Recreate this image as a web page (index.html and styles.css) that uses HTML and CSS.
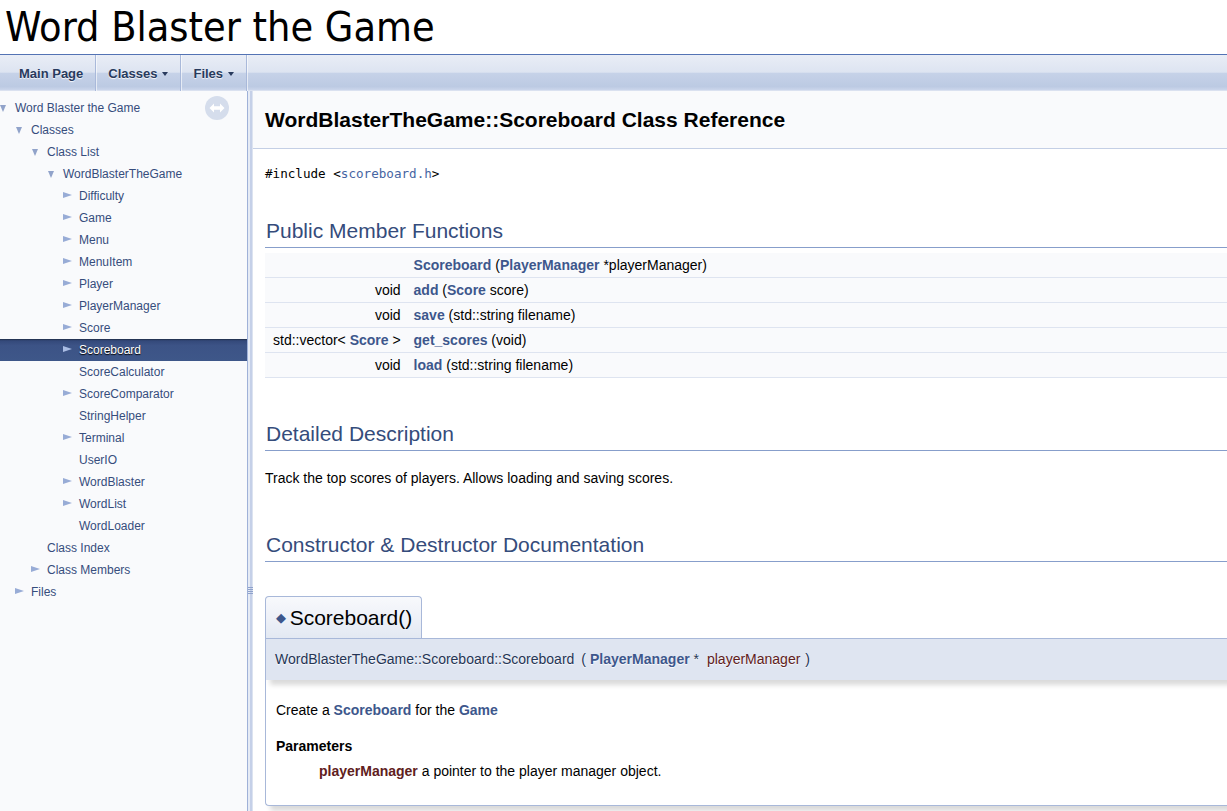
FILE: index.html
```html
<!DOCTYPE html>
<html lang="en">
<head>
<meta charset="utf-8">
<title>Word Blaster the Game: WordBlasterTheGame::Scoreboard Class Reference</title>
<link rel="stylesheet" href="styles.css">
</head>
<body>
<div class="titlearea"><div class="projectname">Word Blaster the Game</div></div>
<nav class="navbar">
  <ul class="tabs">
    <li><a href="#">Main Page</a></li>
    <li><a href="#">Classes<span class="caret"></span></a></li>
    <li><a href="#">Files<span class="caret"></span></a></li>
  </ul>
</nav>
<div class="main">
  <aside class="sidenav">
    <a class="sync" href="#" title="sync">
      <svg width="24" height="24" viewBox="0 0 24 24"><circle cx="12" cy="12" r="12" fill="#D5DDEC"/><path d="M4.5 12 L9 7.5 V10.3 H15 V7.5 L19.5 12 L15 16.5 V13.7 H9 V16.5 Z" fill="#fff"/></svg>
    </a>
    <ul class="tree">
      <li class="row l0"><span class="arr dn"></span><a href="#">Word Blaster the Game</a></li>
      <li class="row l1"><span class="arr dn"></span><a href="#">Classes</a></li>
      <li class="row l2"><span class="arr dn"></span><a href="#">Class List</a></li>
      <li class="row l3"><span class="arr dn"></span><a href="#">WordBlasterTheGame</a></li>
      <li class="row l4"><span class="arr rt"></span><a href="#">Difficulty</a></li>
      <li class="row l4"><span class="arr rt"></span><a href="#">Game</a></li>
      <li class="row l4"><span class="arr rt"></span><a href="#">Menu</a></li>
      <li class="row l4"><span class="arr rt"></span><a href="#">MenuItem</a></li>
      <li class="row l4"><span class="arr rt"></span><a href="#">Player</a></li>
      <li class="row l4"><span class="arr rt"></span><a href="#">PlayerManager</a></li>
      <li class="row l4"><span class="arr rt"></span><a href="#">Score</a></li>
      <li class="row l4 selected"><span class="arr rt"></span><a href="#">Scoreboard</a></li>
      <li class="row l4"><span class="arr"></span><a href="#">ScoreCalculator</a></li>
      <li class="row l4"><span class="arr rt"></span><a href="#">ScoreComparator</a></li>
      <li class="row l4"><span class="arr"></span><a href="#">StringHelper</a></li>
      <li class="row l4"><span class="arr rt"></span><a href="#">Terminal</a></li>
      <li class="row l4"><span class="arr"></span><a href="#">UserIO</a></li>
      <li class="row l4"><span class="arr rt"></span><a href="#">WordBlaster</a></li>
      <li class="row l4"><span class="arr rt"></span><a href="#">WordList</a></li>
      <li class="row l4"><span class="arr"></span><a href="#">WordLoader</a></li>
      <li class="row l2"><span class="arr"></span><a href="#">Class Index</a></li>
      <li class="row l2"><span class="arr rt"></span><a href="#">Class Members</a></li>
      <li class="row l1"><span class="arr rt"></span><a href="#">Files</a></li>
    </ul>
  </aside>
  <div class="splitter"><span class="grip"></span></div>
  <main class="doc">
    <div class="header">
      <div class="title">WordBlasterTheGame::Scoreboard Class Reference</div>
    </div>
    <div class="contents">
      <div class="include"><code>#include &lt;<a class="code" href="#">scoreboard.h</a>&gt;</code></div>

      <h2 class="groupheader first">Public Member Functions</h2>
      <table class="memberdecls">
        <tr><td class="left"></td><td class="right"><a class="el" href="#">Scoreboard</a> (<a class="el" href="#">PlayerManager</a> *playerManager)</td></tr>
        <tr><td class="left">void&nbsp;</td><td class="right"><a class="el" href="#">add</a> (<a class="el" href="#">Score</a> score)</td></tr>
        <tr><td class="left">void&nbsp;</td><td class="right"><a class="el" href="#">save</a> (std::string filename)</td></tr>
        <tr><td class="left">std::vector&lt; <a class="el" href="#">Score</a> &gt;&nbsp;</td><td class="right"><a class="el" href="#">get_scores</a> (void)</td></tr>
        <tr><td class="left">void&nbsp;</td><td class="right"><a class="el" href="#">load</a> (std::string filename)</td></tr>
      </table>

      <h2 class="groupheader">Detailed Description</h2>
      <p class="desc">Track the top scores of players. Allows loading and saving scores.</p>

      <h2 class="groupheader">Constructor &amp; Destructor Documentation</h2>

      <div class="memitem">
        <div class="memtitle"><span class="permalink">◆&nbsp;</span>Scoreboard()</div>
        <div class="memproto">
          <span class="memname">WordBlasterTheGame::Scoreboard::Scoreboard</span>
          <span class="paren">(</span>
          <span class="paramtype"><a class="el" href="#">PlayerManager</a> *</span>
          <span class="paramname">playerManager</span>
          <span class="paren close">)</span>
        </div>
        <div class="memdoc">
          <p>Create a <a class="el" href="#">Scoreboard</a> for the <a class="el" href="#">Game</a></p>
          <dl class="params">
            <dt>Parameters</dt>
            <dd><span class="pname">playerManager</span> a pointer to the player manager object.</dd>
          </dl>
        </div>
      </div>
    </div>
  </main>
</div>
</body>
</html>
```
FILE: styles.css
```css
* { box-sizing: border-box; }
html, body { margin: 0; padding: 0; }
body {
  font-family: "Liberation Sans", Arial, sans-serif;
  font-size: 14px;
  color: #000;
  background: #fff;
  height: 100vh;
  overflow: hidden;
  display: flex;
  flex-direction: column;
}
a { text-decoration: none; }

/* title */
.titlearea {
  height: 55px;
  flex: none;
  border-bottom: 1px solid #5373B4;
  padding-left: 5px;
}
.projectname {
  font-family: "DejaVu Sans Condensed", "DejaVu Sans", sans-serif;
  font-size: 41px;
  line-height: 54px;
  color: #000;
}

/* nav tabs */
.navbar {
  height: 36px;
  flex: none;
  background: linear-gradient(to bottom, #E9EDF6 0%, #DDE4F1 48%, #C6D2E8 50%, #BCCAE3 88%, #C9D4EA 96%, #E3E8F3 100%);
}
.tabs {
  list-style: none;
  margin: 0;
  padding: 0 0 0 7px;
  display: flex;
  height: 36px;
}
.tabs li {
  border-right: 1px solid #A9B9DA;
  box-shadow: 1px 0 0 rgba(255,255,255,0.6);
}
.tabs a {
  display: flex;
  align-items: center;
  height: 36px;
  padding: 0 12px;
  font-size: 13px;
  font-weight: bold;
  color: #283A5D;
  text-shadow: 0 1px 1px rgba(255,255,255,0.9);
}
.caret {
  display: inline-block;
  width: 0; height: 0;
  margin-left: 5px;
  margin-top: 1px;
  border-top: 4px solid #283A5D;
  border-left: 3.5px solid transparent;
  border-right: 3.5px solid transparent;
}

/* main layout */
.main {
  flex: 1;
  display: flex;
  min-height: 0;
}
.sidenav {
  position: relative;
  width: 247px;
  flex: none;
  background: #F9FAFC;
  padding-top: 6px;
  overflow: hidden;
}
.sync {
  position: absolute;
  left: 205px;
  top: 5px;
  width: 24px;
  height: 24px;
}
.sync svg { display: block; }
.tree { list-style: none; margin: 0; padding: 0; }
.row {
  height: 22px;
  display: flex;
  align-items: center;
  font-size: 12px;
  white-space: nowrap;
}
.row a { color: #364D7C; }
.row.l0 { padding-left: 0; }
.row.l1 { padding-left: 16px; }
.row.l2 { padding-left: 32px; }
.row.l3 { padding-left: 48px; }
.row.l4 { padding-left: 64px; }
.arr {
  width: 15px;
  height: 22px;
  flex: none;
  position: relative;
}
.arr.dn::before {
  content: "";
  position: absolute;
  left: 0;
  top: 8px;
  border-top: 7px solid #91A3CA;
  border-left: 3.5px solid transparent;
  border-right: 3.5px solid transparent;
}
.arr.rt::before {
  content: "";
  position: absolute;
  left: -1px;
  top: 7px;
  border-left: 9px solid #98ACD6;
  border-top: 3.5px solid transparent;
  border-bottom: 3.5px solid transparent;
}
.row.selected {
  background: linear-gradient(to bottom, #1E2B45 0%, #34497A 8%, #3C5386 30%, #3E5789 100%);
}
.row.selected a {
  color: #fff;
  text-shadow: 0 1px 1px #000;
}
.row.selected .arr.rt::before { border-left-color: #A9BCE4; }

.splitter {
  width: 6px;
  flex: none;
  position: relative;
  background: linear-gradient(to right, #9FB1D8 0, #9FB1D8 1px, #E6EBF5 1px, #E6EBF5 3px, #C5D0E8 3px, #C5D0E8 5px, #DCE3F0 5px, #DCE3F0 6px);
}
.grip {
  position: absolute;
  left: 1px;
  top: 496px;
  width: 5px;
  height: 8px;
  background: repeating-linear-gradient(to bottom, #8FA2CC 0, #8FA2CC 1px, transparent 1px, transparent 2px);
}

/* document */
.doc {
  flex: 1;
  min-width: 0;
  overflow: hidden;
  background: #fff;
}
.header {
  background: #F9FAFC;
  border-bottom: 1px solid #C4CFE5;
  padding: 15px 0 14px 12px;
}
.title {
  font-size: 21px;
  line-height: 28px;
  font-weight: bold;
  color: #000;
}
.contents {
  padding: 0 0 0 12px;
}
.include {
  margin-top: 13px;
  line-height: 22px;
}
.include code {
  font-family: "DejaVu Sans Mono", monospace;
  font-size: 12.6px;
  color: #000;
}
.include a.code { color: #4665A2; }

h2.groupheader {
  font-size: 21px;
  line-height: 28px;
  font-weight: normal;
  color: #354C7B;
  margin: 42px 0 0 0;
  padding: 0 0 2px 1px;
  border-bottom: 1px solid #879ECB;
}
h2.groupheader.first { margin-top: 32px; }

a.el { color: #3D578C; font-weight: bold; }

.memberdecls {
  margin-top: 5px;
  border-spacing: 0;
  width: 100%;
}
.memberdecls td {
  height: 25px;
  background: #F9FAFC;
  border-bottom: 1px solid #DEE4F0;
  white-space: nowrap;
  padding: 0;
  vertical-align: middle;
}
.memberdecls td.left {
  text-align: right;
  padding: 0 4px 0 8px;
  width: 1%;
}
.memberdecls td.right {
  padding-left: 5px;
}

.desc {
  margin: 16px 0 0 0;
  line-height: 22px;
}

.memitem {
  margin-top: 34px;
}
.memtitle {
  display: inline-block;
  height: 43px;
  padding: 0 9px 0 10px;
  border: 1px solid #A8B8D9;
  border-bottom: none;
  border-radius: 4px 4px 0 0;
  background: linear-gradient(to bottom, #F8F9FC 0%, #EEF1F8 50%, #E2E8F2 100%);
  font-size: 21px;
  line-height: 41px;
  color: #000;
  margin-bottom: -1px;
  position: relative;
}
.permalink {
  font-size: 13px;
  color: #3D578C;
  vertical-align: 3px;
}
.memproto {
  height: 42px;
  display: flex;
  align-items: center;
  padding-left: 9px;
  padding-bottom: 1px;
  background: #DFE5F1;
  border-top: 1px solid #A8B8D9;
  border-left: 1px solid #A8B8D9;
  box-shadow: 5px 5px 5px rgba(0,0,0,0.15);
  color: #253555;
  font-size: 14px;
  white-space: nowrap;
  text-shadow: 0 1px 1px rgba(255,255,255,0.9);
  position: relative;
}
.memname { margin-right: 7px; }
.paren { margin-right: 4px; }
.paren.close { margin-left: 5px; margin-right: 0; }
.paramtype { margin-right: 8px; }
.paramname { color: #602020; }

.memdoc {
  border-left: 1px solid #A8B8D9;
  border-bottom: 1px solid #A8B8D9;
  border-bottom-left-radius: 4px;
  box-shadow: 5px 5px 5px rgba(0,0,0,0.15);
  background: #fff;
  padding: 19px 10px 12px 10px;
  height: 126px;
}
.memdoc p { margin: 0; line-height: 22px; }
.params { margin: 14px 0 0 0; }
.params dt { font-weight: bold; line-height: 22px; }
.params dd { margin: 3px 0 0 0; padding-left: 43px; line-height: 22px; }
.pname { color: #602020; font-weight: bold; }
```
